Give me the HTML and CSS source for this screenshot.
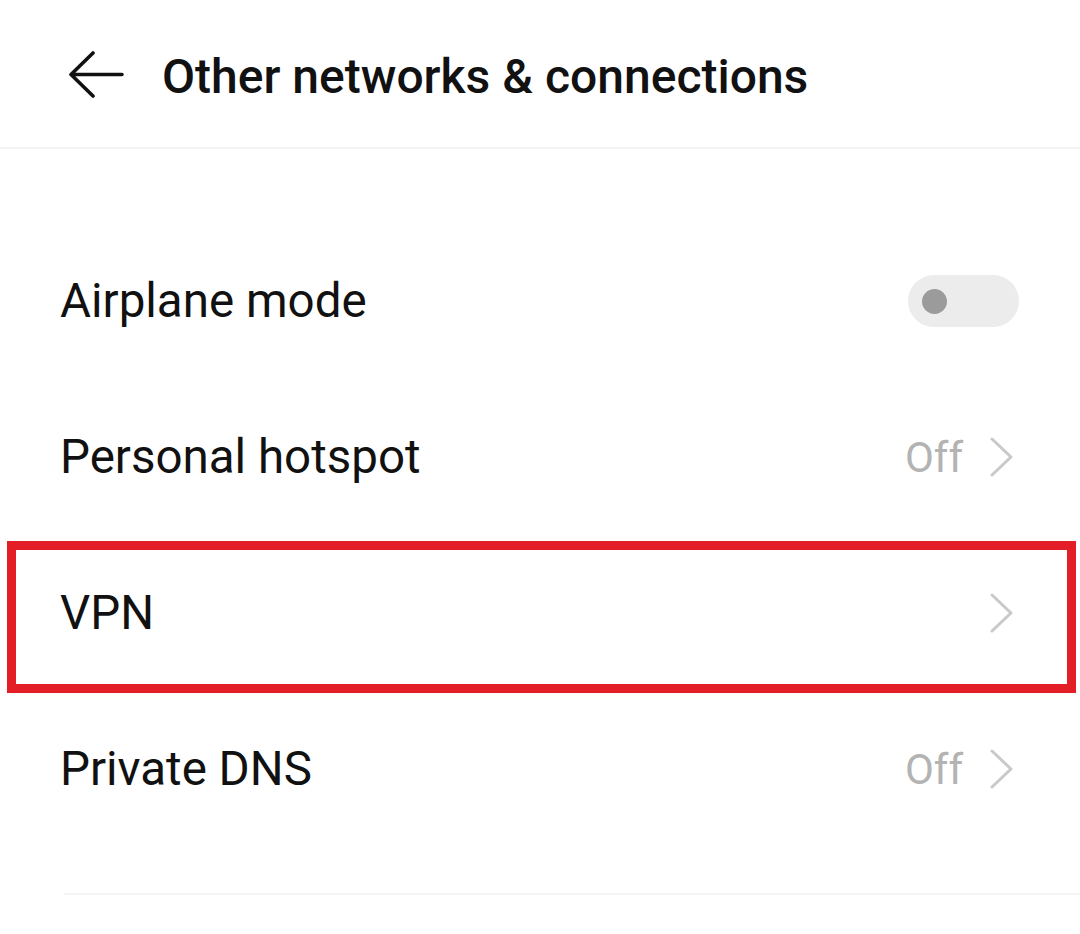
FILE: index.html
```
<!DOCTYPE html>
<html>
<head>
<meta charset="utf-8">
<link rel="stylesheet" href="styles.css">
</head>
<body>
<div class="screen">
  <header class="topbar">
    <svg class="back" width="56" height="50" viewBox="0 0 56 50">
      <path d="M54 23.5 H3 M25 2 L3 23.5 L25 45" fill="none" stroke="#111" stroke-width="3.6" stroke-linecap="round" stroke-linejoin="round"/>
    </svg>
    <h1 class="title">Other networks &amp; connections</h1>
  </header>
  <ul class="list">
    <li class="row">
      <span class="label">Airplane mode</span>
      <span class="toggle"><span class="knob"></span></span>
    </li>
    <li class="row">
      <span class="label">Personal hotspot</span>
      <span class="meta"><span class="value">Off</span>
        <svg class="chev" width="26" height="40" viewBox="0 0 26 40"><path d="M3 2 L22 20 L3 38" fill="none" stroke="#c9c9c9" stroke-width="3" stroke-linecap="round" stroke-linejoin="round"/></svg>
      </span>
    </li>
    <li class="row">
      <span class="label">VPN</span>
      <span class="meta">
        <svg class="chev" width="26" height="40" viewBox="0 0 26 40"><path d="M3 2 L22 20 L3 38" fill="none" stroke="#c9c9c9" stroke-width="3" stroke-linecap="round" stroke-linejoin="round"/></svg>
      </span>
      <span class="highlight"></span>
    </li>
    <li class="row">
      <span class="label">Private DNS</span>
      <span class="meta"><span class="value">Off</span>
        <svg class="chev" width="26" height="40" viewBox="0 0 26 40"><path d="M3 2 L22 20 L3 38" fill="none" stroke="#c9c9c9" stroke-width="3" stroke-linecap="round" stroke-linejoin="round"/></svg>
      </span>
    </li>
  </ul>
  <div class="bottom-sep"></div>
</div>
</body>
</html>
```
FILE: styles.css
```
html, body {
  margin: 0;
  padding: 0;
  background: #ffffff;
}
.screen {
  width: 1080px;
  height: 934px;
  overflow: hidden;
  font-family: Roboto, "Noto Sans", "Liberation Sans", sans-serif;
  color: #111111;
}
.topbar {
  height: 149px;
  border-bottom: 2px solid #f3f3f3;
  display: flex;
  align-items: center;
  padding-left: 68px;
  box-sizing: border-box;
  padding-top: 6px;
}
.back {
  display: block;
  flex: none;
  margin-top: -2px;
}
.title {
  margin: 0 0 0 38px;
  font-size: 48px;
  font-weight: 500;
  letter-spacing: 0;
  color: #111;
}
.list {
  list-style: none;
  margin: 74px 0 0 0;
  padding: 0;
}
.row {
  position: relative;
  height: 156px;
  display: flex;
  align-items: center;
  justify-content: space-between;
  padding: 0 62px 0 60px;
}
.label {
  font-size: 47.5px;
  color: #111;
}
.toggle {
  width: 111px;
  height: 52px;
  border-radius: 26px;
  background: #ececec;
  display: flex;
  align-items: center;
  padding-left: 14px;
  box-sizing: border-box;
  margin-right: -1px;
}
.knob {
  width: 25px;
  height: 25px;
  border-radius: 50%;
  background: #9b9b9b;
}
.meta {
  display: flex;
  align-items: center;
  gap: 26px;
}
.value {
  font-size: 42px;
  color: #b3b3b3;
}
.chev {
  display: block;
  margin-right: 3px;
}
.highlight {
  position: absolute;
  left: 7px;
  top: 6px;
  width: 1069px;
  height: 152px;
  border: 9px solid #e41e26;
  box-sizing: border-box;
}
.bottom-sep {
  margin: 46px 0 0 64px;
  height: 2px;
  background: #f5f5f5;
}
```
